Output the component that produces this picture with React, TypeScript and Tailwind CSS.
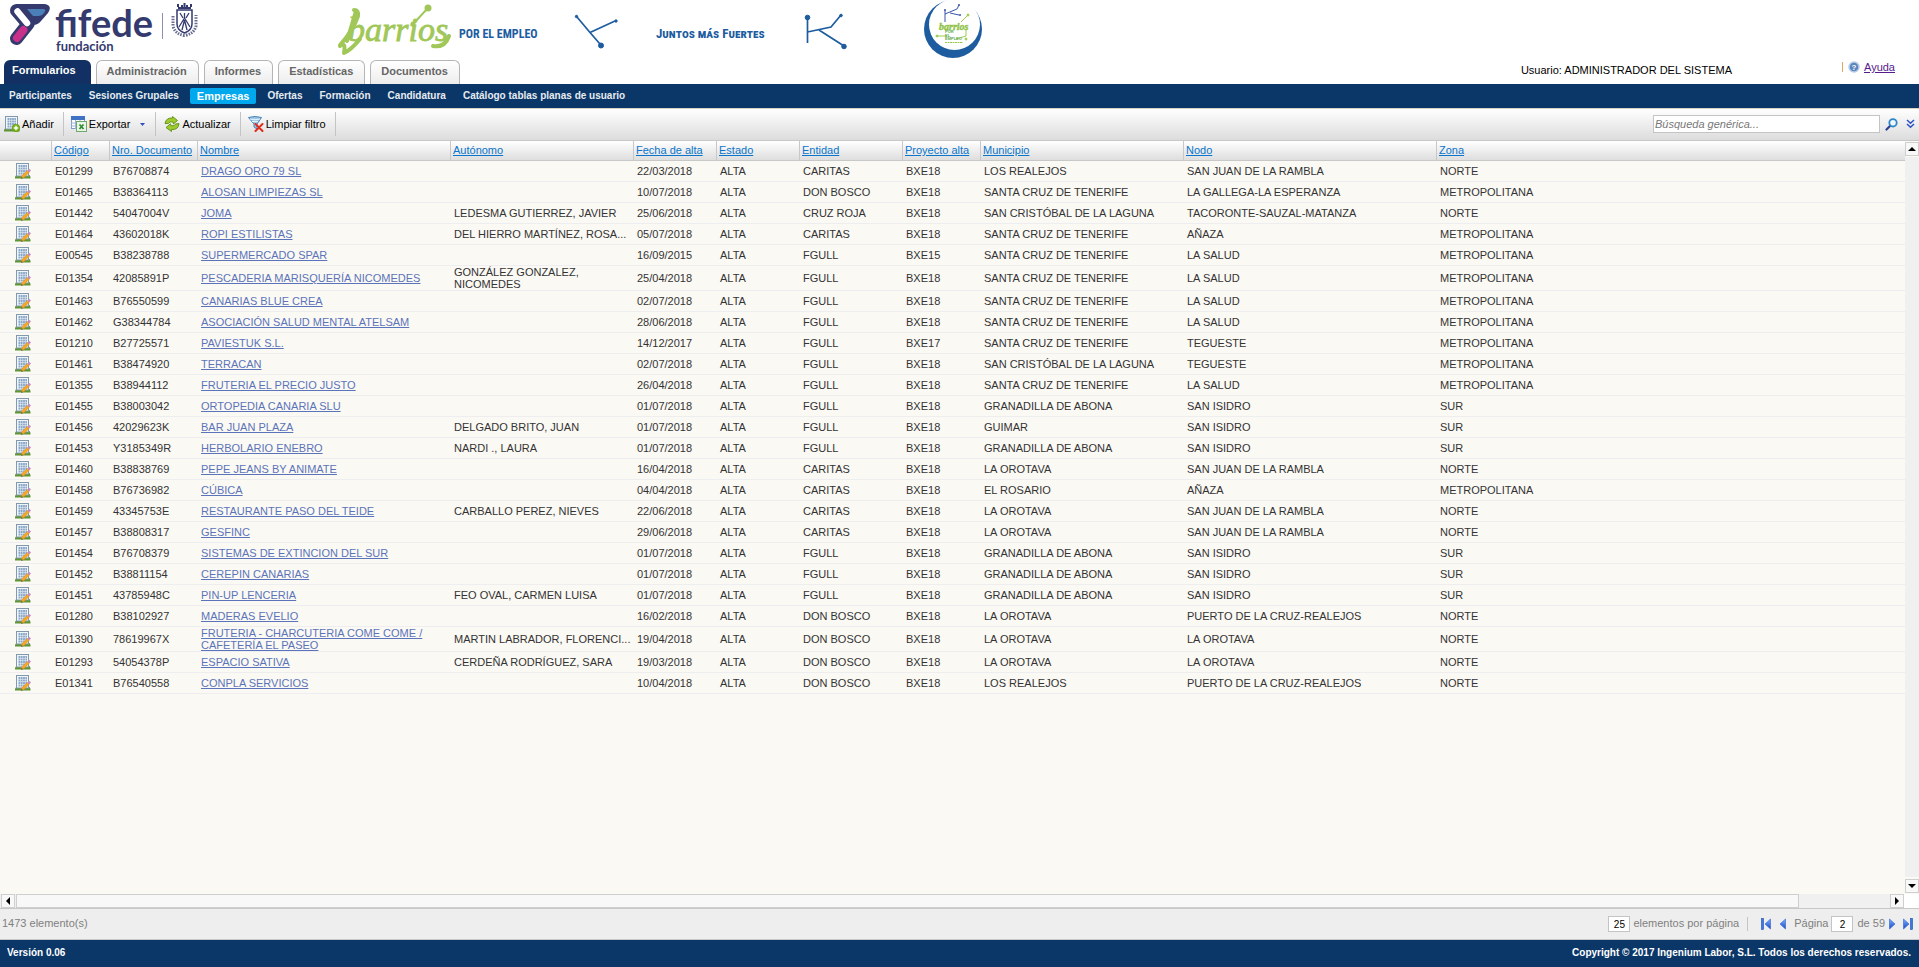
import React, { useState } from "react";

interface Empresa {
  codigo: string;
  documento: string;
  nombre: string;
  autonomo: string;
  fecha: string;
  entidad: string;
  proyecto: string;
  municipio: string;
  nodo: string;
  zona: string;
}

const SC = "SANTA CRUZ DE TENERIFE";
const SL = "SAN CRISTÓBAL DE LA LAGUNA";
const GR = "GRANADILLA DE ABONA";
const ME = "METROPOLITANA";

const rows: Array<Array<string>> = [
  ["E01299", "B76708874", "DRAGO ORO 79 SL", "", "22/03/2018", "CARITAS", "BXE18", "LOS REALEJOS", "SAN JUAN DE LA RAMBLA", "NORTE"],
  ["E01465", "B38364113", "ALOSAN LIMPIEZAS SL", "", "10/07/2018", "DON BOSCO", "BXE18", SC, "LA GALLEGA-LA ESPERANZA", ME],
  ["E01442", "54047004V", "JOMA", "LEDESMA GUTIERREZ, JAVIER", "25/06/2018", "CRUZ ROJA", "BXE18", SL, "TACORONTE-SAUZAL-MATANZA", "NORTE"],
  ["E01464", "43602018K", "ROPI ESTILISTAS", "DEL HIERRO MARTÍNEZ, ROSA...", "05/07/2018", "CARITAS", "BXE18", SC, "AÑAZA", ME],
  ["E00545", "B38238788", "SUPERMERCADO SPAR", "", "16/09/2015", "FGULL", "BXE15", SC, "LA SALUD", ME],
  ["E01354", "42085891P", "PESCADERIA MARISQUERÍA NICOMEDES", "GONZÁLEZ GONZALEZ, NICOMEDES", "25/04/2018", "FGULL", "BXE18", SC, "LA SALUD", ME],
  ["E01463", "B76550599", "CANARIAS BLUE CREA", "", "02/07/2018", "FGULL", "BXE18", SC, "LA SALUD", ME],
  ["E01462", "G38344784", "ASOCIACIÓN SALUD MENTAL ATELSAM", "", "28/06/2018", "FGULL", "BXE18", SC, "LA SALUD", ME],
  ["E01210", "B27725571", "PAVIESTUK S.L.", "", "14/12/2017", "FGULL", "BXE17", SC, "TEGUESTE", ME],
  ["E01461", "B38474920", "TERRACAN", "", "02/07/2018", "FGULL", "BXE18", SL, "TEGUESTE", ME],
  ["E01355", "B38944112", "FRUTERIA EL PRECIO JUSTO", "", "26/04/2018", "FGULL", "BXE18", SC, "LA SALUD", ME],
  ["E01455", "B38003042", "ORTOPEDIA CANARIA SLU", "", "01/07/2018", "FGULL", "BXE18", GR, "SAN ISIDRO", "SUR"],
  ["E01456", "42029623K", "BAR JUAN PLAZA", "DELGADO BRITO, JUAN", "01/07/2018", "FGULL", "BXE18", "GUIMAR", "SAN ISIDRO", "SUR"],
  ["E01453", "Y3185349R", "HERBOLARIO ENEBRO", "NARDI ., LAURA", "01/07/2018", "FGULL", "BXE18", GR, "SAN ISIDRO", "SUR"],
  ["E01460", "B38838769", "PEPE JEANS BY ANIMATE", "", "16/04/2018", "CARITAS", "BXE18", "LA OROTAVA", "SAN JUAN DE LA RAMBLA", "NORTE"],
  ["E01458", "B76736982", "CÚBICA", "", "04/04/2018", "CARITAS", "BXE18", "EL ROSARIO", "AÑAZA", ME],
  ["E01459", "43345753E", "RESTAURANTE PASO DEL TEIDE", "CARBALLO PEREZ, NIEVES", "22/06/2018", "CARITAS", "BXE18", "LA OROTAVA", "SAN JUAN DE LA RAMBLA", "NORTE"],
  ["E01457", "B38808317", "GESFINC", "", "29/06/2018", "CARITAS", "BXE18", "LA OROTAVA", "SAN JUAN DE LA RAMBLA", "NORTE"],
  ["E01454", "B76708379", "SISTEMAS DE EXTINCION DEL SUR", "", "01/07/2018", "FGULL", "BXE18", GR, "SAN ISIDRO", "SUR"],
  ["E01452", "B38811154", "CEREPIN CANARIAS", "", "01/07/2018", "FGULL", "BXE18", GR, "SAN ISIDRO", "SUR"],
  ["E01451", "43785948C", "PIN-UP LENCERIA", "FEO OVAL, CARMEN LUISA", "01/07/2018", "FGULL", "BXE18", GR, "SAN ISIDRO", "SUR"],
  ["E01280", "B38102927", "MADERAS EVELIO", "", "16/02/2018", "DON BOSCO", "BXE18", "LA OROTAVA", "PUERTO DE LA CRUZ-REALEJOS", "NORTE"],
  ["E01390", "78619967X", "FRUTERIA - CHARCUTERIA COME COME / CAFETERÍA EL PASEO", "MARTIN LABRADOR, FLORENCI...", "19/04/2018", "DON BOSCO", "BXE18", "LA OROTAVA", "LA OROTAVA", "NORTE"],
  ["E01293", "54054378P", "ESPACIO SATIVA", "CERDEÑA RODRÍGUEZ, SARA", "19/03/2018", "DON BOSCO", "BXE18", "LA OROTAVA", "LA OROTAVA", "NORTE"],
  ["E01341", "B76540558", "CONPLA SERVICIOS", "", "10/04/2018", "DON BOSCO", "BXE18", "LOS REALEJOS", "PUERTO DE LA CRUZ-REALEJOS", "NORTE"],
];

const empresas: Array<Empresa> = rows.map((r) => ({
  codigo: r[0],
  documento: r[1],
  nombre: r[2],
  autonomo: r[3],
  fecha: r[4],
  entidad: r[5],
  proyecto: r[6],
  municipio: r[7],
  nodo: r[8],
  zona: r[9],
}));

const columns = [
  { label: "Código", width: "w-[58px]" },
  { label: "Nro. Documento", width: "w-[88px]" },
  { label: "Nombre", width: "w-[253px]" },
  { label: "Autónomo", width: "w-[183px]" },
  { label: "Fecha de alta", width: "w-[83px]" },
  { label: "Estado", width: "w-[83px]" },
  { label: "Entidad", width: "w-[103px]" },
  { label: "Proyecto alta", width: "w-[78px]" },
  { label: "Municipio", width: "w-[203px]" },
  { label: "Nodo", width: "w-[253px]" },
  { label: "Zona", width: "w-auto" },
];

const FifedeLogo = () => (
  <svg width="196" height="56" viewBox="4 0 196 56" className="shrink-0">
    <path d="M16 4 H44 Q53 5 48 13 L41 21 Q38 25 33 25 H28 Z" fill="#343a6e" />
    <path d="M16.500 10.500 L28 24 L16.500 38.500" fill="none" stroke="#343a6e" strokeWidth="13" strokeLinecap="round" strokeLinejoin="round" />
    <path d="M27 9 H43 Q47 9 44 13 Q42 16 38 16 H33 Z" fill="#4a7fb8" />
    <path d="M17.500 11.500 L27 23" stroke="#fff" strokeWidth="6.500" strokeLinecap="round" />
    <path d="M23.500 30 L17 38" stroke="#c9308a" strokeWidth="8" strokeLinecap="round" />
    <text x="55" y="37" fill="#343a6e" fontSize="38" fontWeight="700" fontFamily="Lato, sans-serif">fifede</text>
    <text x="56" y="51" fill="#343a6e" fontSize="13" fontWeight="700" fontFamily="Lato, sans-serif">fundación</text>
    <path d="M162.500 13 V39" stroke="#8d90ad" />
    <g fill="none" stroke="#343a6e">
      <path d="M177 10 H192 V24 Q192 30 184.500 33 Q177 30 177 24 Z" strokeWidth="1.500" />
      <path d="M184.500 13 V18 M180 13 L183 18 M189 13 L186 18 M184.500 18 L179 27 M184.500 18 L190 27 M184.500 20 L182 30 M184.500 20 L187 30" strokeWidth="1.300" />
      <path d="M178 8 H191 M178 4 V7 M182 5 V7 M184.500 3 V7 M187 5 V7 M191 4 V7" strokeWidth="2" />
      <path d="M173 16 V26 Q175 34 184.500 35.500 Q194 34 196 26 V15" strokeWidth="3" strokeDasharray="1.500 1.200" opacity=".75" />
    </g>
  </svg>
);

const BarriosLogo = () => (
  <svg width="116" height="58" viewBox="0 0 116 58" className="shrink-0">
    <g fill="none" stroke="#a0c757" strokeLinecap="round" strokeLinejoin="round">
      <path d="M19 11 L10 41" strokeWidth="4" />
      <path d="M17 10 Q22 10 21 16 Q16 31 3 45 M3 46 Q9 41 7 53 Q14 50 23 39" strokeWidth="4" />
      <path d="M76 24 L91 8" strokeWidth="2" />
      <path d="M96 46 Q108 48 112 36" strokeWidth="4" />
    </g>
    <circle cx="91" cy="8" r="3.500" fill="#a0c757" />
    <circle cx="76" cy="24" r="2.500" fill="#a0c757" />
    <text x="11" y="41" fill="#a0c757" stroke="#a0c757" strokeWidth=".8" fontSize="34" fontStyle="italic" fontFamily="'Liberation Serif', serif">barrios</text>
  </svg>
);

const BranchMark = () => (
  <svg width="46" height="38" viewBox="0 0 46 38" className="shrink-0" fill="#1c5c9f" stroke="#1c5c9f">
    <path d="M3 3 L16 18.500 L26 30 M16 18.500 L41 7" fill="none" strokeWidth="1.700" />
    <circle cx="2.500" cy="2.500" r="1.200" />
    <circle cx="27" cy="31.500" r="2.500" />
    <circle cx="42" cy="7" r="1.200" />
  </svg>
);

const KMark = () => (
  <svg width="46" height="38" viewBox="0 0 46 38" className="shrink-0" fill="#1c5c9f" stroke="#1c5c9f">
    <path d="M3.500 4 V30 M3.500 19 L27 14 L37 2 M15 17 L40 33" fill="none" strokeWidth="1.700" />
    <circle cx="3.500" cy="4.500" r="2.300" />
    <circle cx="37" cy="2.500" r="1.300" />
    <circle cx="40" cy="33.500" r="2.300" />
  </svg>
);

const MoonLogo = () => (
  <svg width="60" height="60" viewBox="0 0 60 60" className="shrink-0">
    <mask id="moon">
      <rect width="60" height="60" fill="#fff" />
      <circle cx="31.500" cy="24.500" r="25.500" fill="#000" />
    </mask>
    <circle cx="30" cy="29" r="29" fill="#1c5c9f" mask="url(#moon)" />
    <g fill="none" stroke="#3a55a8">
      <path d="M22 10 V22 M22 14 L34 9 L36 5 M27 13 L36 15" />
    </g>
    <g fill="#3a55a8">
      <circle cx="22" cy="10" r="1" />
      <circle cx="36" cy="5" r="1" />
      <circle cx="37" cy="15" r="1" />
    </g>
    <g stroke="#9ccb4f" fill="#9ccb4f">
      <path d="M38 22 L45 15 M14 36 H24 M33 39 L43 36 V30" fill="none" />
      <circle cx="45" cy="15" r="1" />
      <circle cx="14" cy="36" r="1" />
      <circle cx="43" cy="39" r="1" />
      <path d="M22 42.500 H40" strokeDasharray="2 .5" />
    </g>
    <text x="16" y="30" fill="#8fc248" stroke="#8fc248" strokeWidth=".4" fontSize="10" fontStyle="italic" fontWeight="700" fontFamily="'Liberation Serif', serif">barrios</text>
    <g fill="#5faa4a" fontSize="4" fontWeight="700" fontFamily="'Liberation Sans', sans-serif">
      <text x="22" y="33">POR</text>
      <text x="22" y="36.500">EL</text>
      <text x="22" y="40">EMPLEO</text>
    </g>
  </svg>
);

// grey office building on grass, shared by the "add" and "edit" icons
const Building = () => (
  <g>
    <path d="M0 15.500 V14 Q1 11 4 12 H12 Q15 11 15.500 14 V15.500 Z" fill="#5f9630" />
    <rect x="1.500" y=".5" width="12" height="12.500" fill="#f1f5f9" stroke="#8299ad" />
    <path d="M3.500 3 H12 M3.500 5.500 H12 M3.500 8 H12 M3.500 10.500 H12" stroke="#8aa8c8" strokeWidth="1.800" strokeDasharray="1.800 .500" />
  </g>
);

const AddIcon = () => (
  <svg width="16" height="16" viewBox="0 0 16 16">
    <Building />
    <circle cx="12" cy="12" r="3.800" fill="#7cb518" stroke="#5f8f10" strokeWidth=".6" />
    <path d="M12 9.800 V14.200 M9.800 12 H14.200" stroke="#fff" strokeWidth="1.400" />
  </svg>
);

const EditIcon = () => (
  <svg width="16" height="16" viewBox="0 0 16 16">
    <Building />
    <path d="M7 12.500 L12.500 7.500 L14.300 9.300 L9 14.500 L6.500 15.300 Z" fill="#f7a823" stroke="#d98a2b" strokeWidth=".5" />
    <path d="M12.500 7.500 L14.200 5.800 L16 7.600 L14.300 9.300 Z" fill="#c98bc4" />
    <path d="M6.200 15.700 L6.600 14 L8 15.200 Z" fill="#555" />
  </svg>
);

const ExportIcon = () => (
  <svg width="16" height="16" viewBox="0 0 16 16">
    <rect x=".5" y=".5" width="13" height="12" fill="#fff" stroke="#7d9cc9" />
    <rect x="0" y="0" width="14" height="4" fill="#3f72c4" />
    <path d="M0 7 H14 M0 10 H14 M4.500 4 V13 M9 4 V13" stroke="#9db5d8" />
    <rect x="5.500" y="5.500" width="10" height="10" fill="#e9f5e6" stroke="#6fa86b" />
    <path d="M8.500 8.500 L12.500 13 M12.500 8.500 L8.500 13" stroke="#2f8a35" strokeWidth="1.700" />
  </svg>
);

const RefreshIcon = () => (
  <svg width="16" height="16" viewBox="0 0 16 16" fill="#9ccb2a" stroke="#5d8f14" strokeWidth=".9" strokeLinejoin="round">
    <path d="M1 7.500 Q2 1.500 8.500 2 L8.500 .5 L13.500 4.500 L9.500 8 L9 6 Q5.500 5 4.500 7.500 Z" />
    <path d="M15 7.500 Q14.500 14 7.500 13.500 L7.500 15.500 L2 11.500 L6.500 7.800 L7 9.700 Q11 10.500 11.500 8 Z" />
  </svg>
);

const ClearFilterIcon = () => (
  <svg width="16" height="16" viewBox="0 0 16 16">
    <path d="M.5 1.500 Q7 -.5 13.500 1.500 L9 8 V13 L6 11 V8 Z" fill="#9cc7e8" stroke="#4883b5" />
    <path d="M2 3 Q7 4.500 12 3 M4 5.500 H10" stroke="#e4f2fb" fill="none" />
    <path d="M7.500 8 L14.500 15 M14.500 8 L7.500 15" stroke="#e02a1c" strokeWidth="2" strokeLinecap="round" />
  </svg>
);

const SearchIcon = () => (
  <svg width="13" height="13" viewBox="0 0 13 13" fill="none">
    <path d="M5.500 7.500 L1.500 11.500" stroke="#27408f" strokeWidth="2.200" strokeLinecap="round" />
    <circle cx="8" cy="4.800" r="3.700" fill="#eef7fd" stroke="#2f86c6" strokeWidth="1.800" />
  </svg>
);

const Arrow = ({ d }: { d: string }) => (
  <svg width="12" height="12" viewBox="0 0 12 12" fill="#000">
    <path d={d} />
  </svg>
);

const PagerIcon = ({ d, bar, width }: { d: string; bar?: number; width: number }) => (
  <svg width={width} height="12" viewBox={`0 0 ${width} 12`}>
    <defs>
      <linearGradient id="pagerBlue" x1="0" y1="0" x2="0" y2="1">
        <stop offset="0" stopColor="#7fb2fb" />
        <stop offset="1" stopColor="#1747c8" />
      </linearGradient>
    </defs>
    {bar !== undefined && <rect x={bar} y=".5" width="2" height="11" fill="#3b78e7" stroke="#1f4fae" strokeWidth=".6" />}
    <path d={d} fill="url(#pagerBlue)" stroke="#2f62cf" strokeWidth=".6" />
  </svg>
);

const Tab = ({ label }: { label: string }) => (
  <button className="h-6 rounded-t-[6px] border border-b-0 border-[#b5b5b5] bg-linear-to-b from-white to-[#ededed] pr-[11px] pb-1 pl-[10px] font-bold text-[#666]">
    {label}
  </button>
);

const App = () => {
  const [search, setSearch] = useState<string>("");
  const [pageSize, setPageSize] = useState<string>("25");
  const [page, setPage] = useState<string>("2");

  return (
    <div className="flex min-h-screen flex-col bg-white font-['Liberation_Sans',Arial,sans-serif] text-[11px] leading-3 text-black">
      <header>
        <div className="flex h-[60px] items-start overflow-hidden pl-1 text-[#1c5c9f]">
          <FifedeLogo />
          <div className="ml-[137px] flex items-start">
            <BarriosLogo />
            <span className="mt-[26px] ml-[6px] w-[78px] text-[12px] leading-4 font-bold whitespace-nowrap font-['Roboto_Condensed','Liberation_Sans_Narrow',Roboto,sans-serif]">
              POR EL EMPLEO
            </span>
            <div className="mt-[14px] ml-[37px]">
              <BranchMark />
            </div>
            <span className="mt-[26px] ml-[36px] w-[110px] text-[13px] leading-4 font-bold whitespace-nowrap font-['Roboto_Condensed','Liberation_Sans_Narrow',Roboto,sans-serif] [font-variant-caps:small-caps]">
              Juntos más Fuertes
            </span>
            <div className="mt-[13px] ml-[38px]">
              <KMark />
            </div>
            <div className="ml-[73px]">
              <MoonLogo />
            </div>
          </div>
        </div>
        <div className="flex justify-between">
          <div className="flex gap-[5px] pl-1">
            <button className="h-6 rounded-t-[6px] bg-[#123063] pr-[15px] pb-1 pl-2 font-bold text-white">Formularios</button>
            <Tab label="Administración" />
            <Tab label="Informes" />
            <Tab label="Estadísticas" />
            <Tab label="Documentos" />
          </div>
          <div className="flex pr-6">
            <span className="mt-1 mr-[110px]">Usuario: ADMINISTRADOR DEL SISTEMA</span>
            <div className="flex h-[14px] items-center gap-1">
              <span className="mr-px h-[10px] w-px bg-[#e8a35c]"></span>
              <svg width="12" height="12" viewBox="0 0 12 12">
                <circle cx="6" cy="6" r="5" fill="#5c86be" stroke="#b9cce6" strokeWidth="1.500" />
                <text x="6" y="8.800" textAnchor="middle" fontSize="8" fontWeight="700" fill="#fff">?</text>
              </svg>
              <a href="#ayuda" className="text-[#551a8b] underline">Ayuda</a>
            </div>
          </div>
        </div>
        <nav className="flex h-6 items-center gap-[5px] bg-[#0a3768] pb-px pl-[3px] text-[10px] font-bold text-[#e6ebf1]">
          <a href="#participantes" className="px-[6px]">Participantes</a>
          <a href="#sesiones" className="px-[6px]">Sesiones Grupales</a>
          <a href="#empresas" className="rounded-xs bg-[#00a8ee] px-[7px] py-[2px] text-[11px] text-white">Empresas</a>
          <a href="#ofertas" className="px-[6px]">Ofertas</a>
          <a href="#formacion" className="px-[6px]">Formación</a>
          <a href="#candidatura" className="px-[6px]">Candidatura</a>
          <a href="#catalogo" className="px-[6px]">Catálogo tablas planas de usuario</a>
        </nav>
      </header>

      <div className="flex h-[33px] items-center justify-between border-y border-t-[#d8d2c0] border-b-[#c8c8c8] bg-linear-to-b from-white to-[#dcdcdc] pr-1 pb-px pl-1">
        <div className="flex items-center">
          <button className="flex h-6 items-center gap-[2px] border-r border-[#c4c4c4] pr-[9px]">
            <AddIcon /> Añadir
          </button>
          <button className="flex h-6 items-center gap-[2px] border-r border-[#c4c4c4] pr-[10px] pl-[7px]">
            <ExportIcon /> Exportar
            <svg width="5" height="3" viewBox="0 0 5 3" className="ml-2">
              <path d="M0 0 H5 L2.500 3 Z" fill="#2f4fc0" />
            </svg>
          </button>
          <button className="flex h-6 items-center gap-[2px] border-r border-[#c4c4c4] pr-[9px] pl-2">
            <RefreshIcon /> Actualizar
          </button>
          <button className="flex h-6 items-center gap-[2px] border-r border-[#c4c4c4] pr-[9px] pl-[7px]">
            <ClearFilterIcon /> Limpiar filtro
          </button>
        </div>
        <div className="flex items-center">
          <input
            aria-label="Búsqueda genérica"
            className="h-[18px] w-[227px] border border-[#c4c4c4] bg-white pl-px italic placeholder:text-[#777]"
            placeholder="Búsqueda genérica..."
            value={search}
            onChange={(e) => setSearch(e.target.value)}
          />
          <button aria-label="Buscar" className="ml-[5px]">
            <SearchIcon />
          </button>
          <button aria-label="Búsqueda avanzada" className="ml-2">
            <svg width="9" height="10" viewBox="0 0 9 10" fill="none" stroke="#2c50c8" strokeWidth="1.500">
              <path d="M1 1 L4.500 4.300 L8 1 M1 5 L4.500 8.300 L8 5" />
            </svg>
          </button>
        </div>
      </div>

      <main className="flex flex-1 flex-col bg-[#fbf9f4]">
        <div className="flex flex-1">
          <div className="min-w-0 flex-1">
            <table className="w-full table-fixed border-separate border-spacing-0 text-left">
              <thead>
                <tr className="h-5 *:border-b *:border-[#c8c8c8] *:bg-linear-to-b *:from-white *:to-[#dedede]">
                  <th className="w-[51px] p-0" aria-label="Editar"></th>
                  {columns.map((col) => (
                    <th key={col.label} className={`${col.width} border-l p-0 pb-px pl-[2px] font-normal whitespace-nowrap`}>
                      <a href="#orden" className="text-[#0a75cb] underline">{col.label}</a>
                    </th>
                  ))}
                </tr>
              </thead>
              <tbody className="text-[#333]">
                {empresas.map((e) => (
                  <tr key={e.codigo} className="h-[21px] *:border-b *:border-[#eeeef0] *:p-0 *:pl-1">
                    <td>
                      <button aria-label={"Editar " + e.nombre} className="ml-[11px] block">
                        <EditIcon />
                      </button>
                    </td>
                    <td>{e.codigo}</td>
                    <td>{e.documento}</td>
                    <td>
                      <a href="#empresa" className="text-[#5b74b9] underline">{e.nombre}</a>
                    </td>
                    <td>{e.autonomo}</td>
                    <td>{e.fecha}</td>
                    <td>ALTA</td>
                    <td>{e.entidad}</td>
                    <td>{e.proyecto}</td>
                    <td>{e.municipio}</td>
                    <td>{e.nodo}</td>
                    <td>{e.zona}</td>
                  </tr>
                ))}
              </tbody>
            </table>
          </div>
          <div className="flex w-[14px] flex-col gap-px py-px">
            <button aria-label="Subir" className="flex h-[14px] items-center justify-center border border-[#cfcfcf] bg-[#f8f8f8]">
              <Arrow d="M2 8 L6 4 L10 8 Z" />
            </button>
            <div className="mb-px flex-1 bg-[#f0f0f0]"></div>
            <button aria-label="Bajar" className="flex h-[14px] items-center justify-center border border-[#cfcfcf] bg-[#f8f8f8]">
              <Arrow d="M2 4 L6 8 L10 4 Z" />
            </button>
          </div>
        </div>
        <div className="flex h-[14px] bg-[#f0f0f0] pl-px">
          <button aria-label="Izquierda" className="flex w-[14px] items-center justify-center border border-[#cfcfcf] bg-[#f8f8f8]">
            <Arrow d="M8 2 L4 6 L8 10 Z" />
          </button>
          <div className="ml-px flex flex-1 pr-[2px]">
            <div className="flex-20 border border-[#cfcfcf] bg-[#f8f8f8]"></div>
            <div className="flex-1"></div>
          </div>
          <button aria-label="Derecha" className="flex w-[14px] items-center justify-center border border-[#cfcfcf] bg-[#f8f8f8]">
            <Arrow d="M4 2 L8 6 L4 10 Z" />
          </button>
          <div className="w-[15px] bg-white"></div>
        </div>
      </main>

      <div className="flex h-8 items-center justify-between border-y border-[#c8c8c8] bg-[#eee] pr-[6px] pl-[2px] text-[#808080]">
        <span className="pb-[2px]">1473 elemento(s)</span>
        <div className="flex items-center">
          <input
            id="pageSize"
            className="h-4 w-[22px] border border-[#c4c4c4] bg-white text-center text-[10px] text-black"
            value={pageSize}
            onChange={(e) => setPageSize(e.target.value)}
          />
          <label htmlFor="pageSize" className="border-r border-[#c4c4c4] pr-2 pb-[2px] pl-[3px]">
            elementos por página
          </label>
          <button aria-label="Primera" className="ml-[13px]">
            <PagerIcon width={10} bar={0.5} d="M9.500 1 V11 L4 6 Z" />
          </button>
          <button aria-label="Anterior" className="ml-2">
            <PagerIcon width={7} d="M6.500 1 V11 L1 6 Z" />
          </button>
          <label htmlFor="page" className="pr-[3px] pb-[2px] pl-2">Página</label>
          <input
            id="page"
            className="h-4 w-[22px] border border-[#c4c4c4] bg-white text-center text-[10px] text-black"
            value={page}
            onChange={(e) => setPage(e.target.value)}
          />
          <span className="pr-1 pb-[2px] pl-1">de 59</span>
          <button aria-label="Siguiente">
            <PagerIcon width={7} d="M.5 1 V11 L6 6 Z" />
          </button>
          <button aria-label="Última" className="ml-[7px]">
            <PagerIcon width={10} bar={7.5} d="M.5 1 V11 L6 6 Z" />
          </button>
        </div>
      </div>

      <footer className="flex h-[27px] items-center justify-between bg-[#0a3768] pr-2 pb-px pl-[7px] text-[10px] font-bold text-white">
        <span>Versión 0.06</span>
        <span>Copyright © 2017 Ingenium Labor, S.L. Todos los derechos reservados.</span>
      </footer>
    </div>
  );
};

export default App;
